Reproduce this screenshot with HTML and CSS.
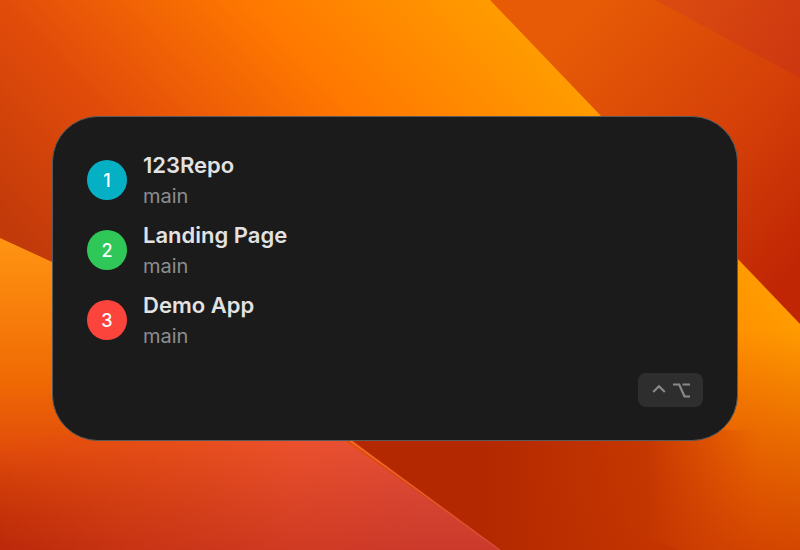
FILE: index.html
```html
<!DOCTYPE html>
<html lang="en">
<head>
<meta charset="utf-8">
<title>Repo switcher</title>
<link rel="stylesheet" href="styles.css">
</head>
<body>
<svg class="wallpaper" viewBox="0 0 800 550" preserveAspectRatio="none" aria-hidden="true">
  <defs>
    <linearGradient id="gBase" gradientUnits="userSpaceOnUse" x1="-108" y1="104" x2="256" y2="-245">
      <stop offset="0" stop-color="#c23a0a"/>
      <stop offset="0.3" stop-color="#e24c0a"/>
      <stop offset="0.65" stop-color="#ff7800"/>
      <stop offset="1" stop-color="#ff9c00"/>
    </linearGradient>
    <linearGradient id="gB" gradientUnits="userSpaceOnUse" x1="560" y1="40" x2="800" y2="260">
      <stop offset="0" stop-color="#e75b06"/>
      <stop offset="0.6" stop-color="#d43f08"/>
      <stop offset="1" stop-color="#c02604"/>
    </linearGradient>
    <linearGradient id="gC" gradientUnits="userSpaceOnUse" x1="680" y1="0" x2="800" y2="80">
      <stop offset="0" stop-color="#da4a10"/>
      <stop offset="1" stop-color="#cd3610"/>
    </linearGradient>
    <linearGradient id="gOver" gradientUnits="userSpaceOnUse" x1="0" y1="330" x2="0" y2="550">
      <stop offset="0" stop-color="#c03000" stop-opacity="0"/>
      <stop offset="1" stop-color="#c03000" stop-opacity="0.7"/>
    </linearGradient>
    <linearGradient id="gD" gradientUnits="userSpaceOnUse" x1="0" y1="240" x2="0" y2="550">
      <stop offset="0" stop-color="#ff9412"/>
      <stop offset="0.45" stop-color="#f06a04"/>
      <stop offset="0.7" stop-color="#e04a0a"/>
      <stop offset="1" stop-color="#c43000"/>
    </linearGradient>
    <linearGradient id="gE" gradientUnits="userSpaceOnUse" x1="0" y1="0" x2="420" y2="0">
      <stop offset="0" stop-color="#e44c12" stop-opacity="0"/>
      <stop offset="0.3" stop-color="#e44c18" stop-opacity="0.7"/>
      <stop offset="0.7" stop-color="#ea502c"/>
      <stop offset="1" stop-color="#e24e3a"/>
    </linearGradient>
    <linearGradient id="gE2" gradientUnits="userSpaceOnUse" x1="0" y1="445" x2="0" y2="550">
      <stop offset="0" stop-color="#a82010" stop-opacity="0"/>
      <stop offset="1" stop-color="#b02018" stop-opacity="0.45"/>
    </linearGradient>
    <linearGradient id="gF" gradientUnits="userSpaceOnUse" x1="480" y1="0" x2="760" y2="0">
      <stop offset="0" stop-color="#b32800"/>
      <stop offset="0.6" stop-color="#c23400" stop-opacity="0.9"/>
      <stop offset="1" stop-color="#d04005" stop-opacity="0"/>
    </linearGradient>
    <linearGradient id="gEdge" gradientUnits="userSpaceOnUse" x1="350" y1="441" x2="500" y2="550">
      <stop offset="0" stop-color="#ff8a60" stop-opacity="0.55"/>
      <stop offset="1" stop-color="#ff7070" stop-opacity="0.35"/>
    </linearGradient>
  </defs>
  <rect width="800" height="550" fill="url(#gBase)"/>
  <polygon points="490,0 800,0 800,324" fill="url(#gB)"/>
  <polygon points="655,0 800,0 800,78" fill="url(#gC)"/>
  <rect y="330" width="800" height="220" fill="url(#gOver)"/>
  <polygon points="0,238 678,550 0,550" fill="url(#gD)"/>
  <polygon points="0,436 338,436 500,550 0,550" fill="url(#gE)"/>
  <polygon points="0,445 350,445 500,550 0,550" fill="url(#gE2)"/>
  <polygon points="338,430 800,430 800,550 500,550" fill="url(#gF)"/>
  <line x1="341" y1="434" x2="500" y2="550" stroke="url(#gEdge)" stroke-width="1.5"/>
</svg>

<main class="panel">
  <ul class="repos">
    <li class="repo">
      <span class="badge badge-teal">1</span>
      <div class="repo-text">
        <div class="repo-name">123Repo</div>
        <div class="repo-branch">main</div>
      </div>
    </li>
    <li class="repo">
      <span class="badge badge-green">2</span>
      <div class="repo-text">
        <div class="repo-name">Landing Page</div>
        <div class="repo-branch">main</div>
      </div>
    </li>
    <li class="repo">
      <span class="badge badge-red">3</span>
      <div class="repo-text">
        <div class="repo-name">Demo App</div>
        <div class="repo-branch">main</div>
      </div>
    </li>
  </ul>
  <div class="footer">
    <kbd class="shortcut" title="Control Option">
      <svg class="key-control" viewBox="0 0 14 8" aria-label="Control">
        <polyline points="1.2,7 7,1.3 12.8,7"/>
      </svg>
      <svg class="key-option" viewBox="0 0 17 15" aria-label="Option">
        <path d="M0 1.5 H6.2 L11.5 13.5 H17 M9.5 1.5 H17"/>
      </svg>
    </kbd>
  </div>
</main>
</body>
</html>
```

FILE: styles.css
```css
html, body {
  margin: 0;
  padding: 0;
}

body {
  width: 800px;
  height: 550px;
  overflow: hidden;
  position: relative;
  font-family: Inter, "Noto Sans", "Liberation Sans", sans-serif;
  padding-top: 116px;
  padding-left: 52px;
  box-sizing: border-box;
}

.wallpaper {
  position: absolute;
  left: 0;
  top: 0;
  width: 800px;
  height: 550px;
  display: block;
  z-index: 0;
}

.panel {
  position: relative;
  z-index: 1;
  box-sizing: border-box;
  width: 686px;
  height: 325px;
  background: #1b1b1b;
  border: 1.5px solid #5a5a5a;
  border-radius: 46px;
  padding: 28px 34px 33px 34px;
  display: flex;
  flex-direction: column;
}

.repos {
  list-style: none;
  margin: 0;
  padding: 0;
  display: flex;
  flex-direction: column;
}

.repo {
  height: 70px;
  display: flex;
  align-items: center;
  gap: 16px;
}

.badge {
  width: 40px;
  height: 40px;
  border-radius: 50%;
  display: flex;
  align-items: center;
  justify-content: center;
  color: #ffffff;
  font-size: 18px;
  font-weight: 500;
  flex: none;
}

.badge-teal { background: #06b0c4; }
.badge-green { background: #30c759; }
.badge-red { background: #fa443c; }

.repo-text {
  display: flex;
  flex-direction: column;
}

.repo-name {
  font-size: 22px;
  font-weight: 600;
  line-height: 31px;
  color: #e2e2e2;
}

.repo-branch {
  font-size: 20px;
  font-weight: 400;
  line-height: 30px;
  color: #8d8d8d;
}

.footer {
  margin-top: auto;
  display: flex;
  justify-content: flex-end;
}

.shortcut {
  box-sizing: border-box;
  width: 65px;
  height: 34px;
  border-radius: 8px;
  background: #2e2e2e;
  display: flex;
  align-items: center;
  justify-content: center;
  gap: 7px;
  padding-left: 1px;
}

.shortcut svg {
  display: block;
  fill: none;
  stroke: #8a8a8a;
  stroke-width: 2.2;
  stroke-linecap: butt;
  stroke-linejoin: miter;
}

.key-control {
  width: 14px;
  height: 8px;
  margin-top: -3px;
}

.key-option {
  width: 17px;
  height: 15px;
}
```
